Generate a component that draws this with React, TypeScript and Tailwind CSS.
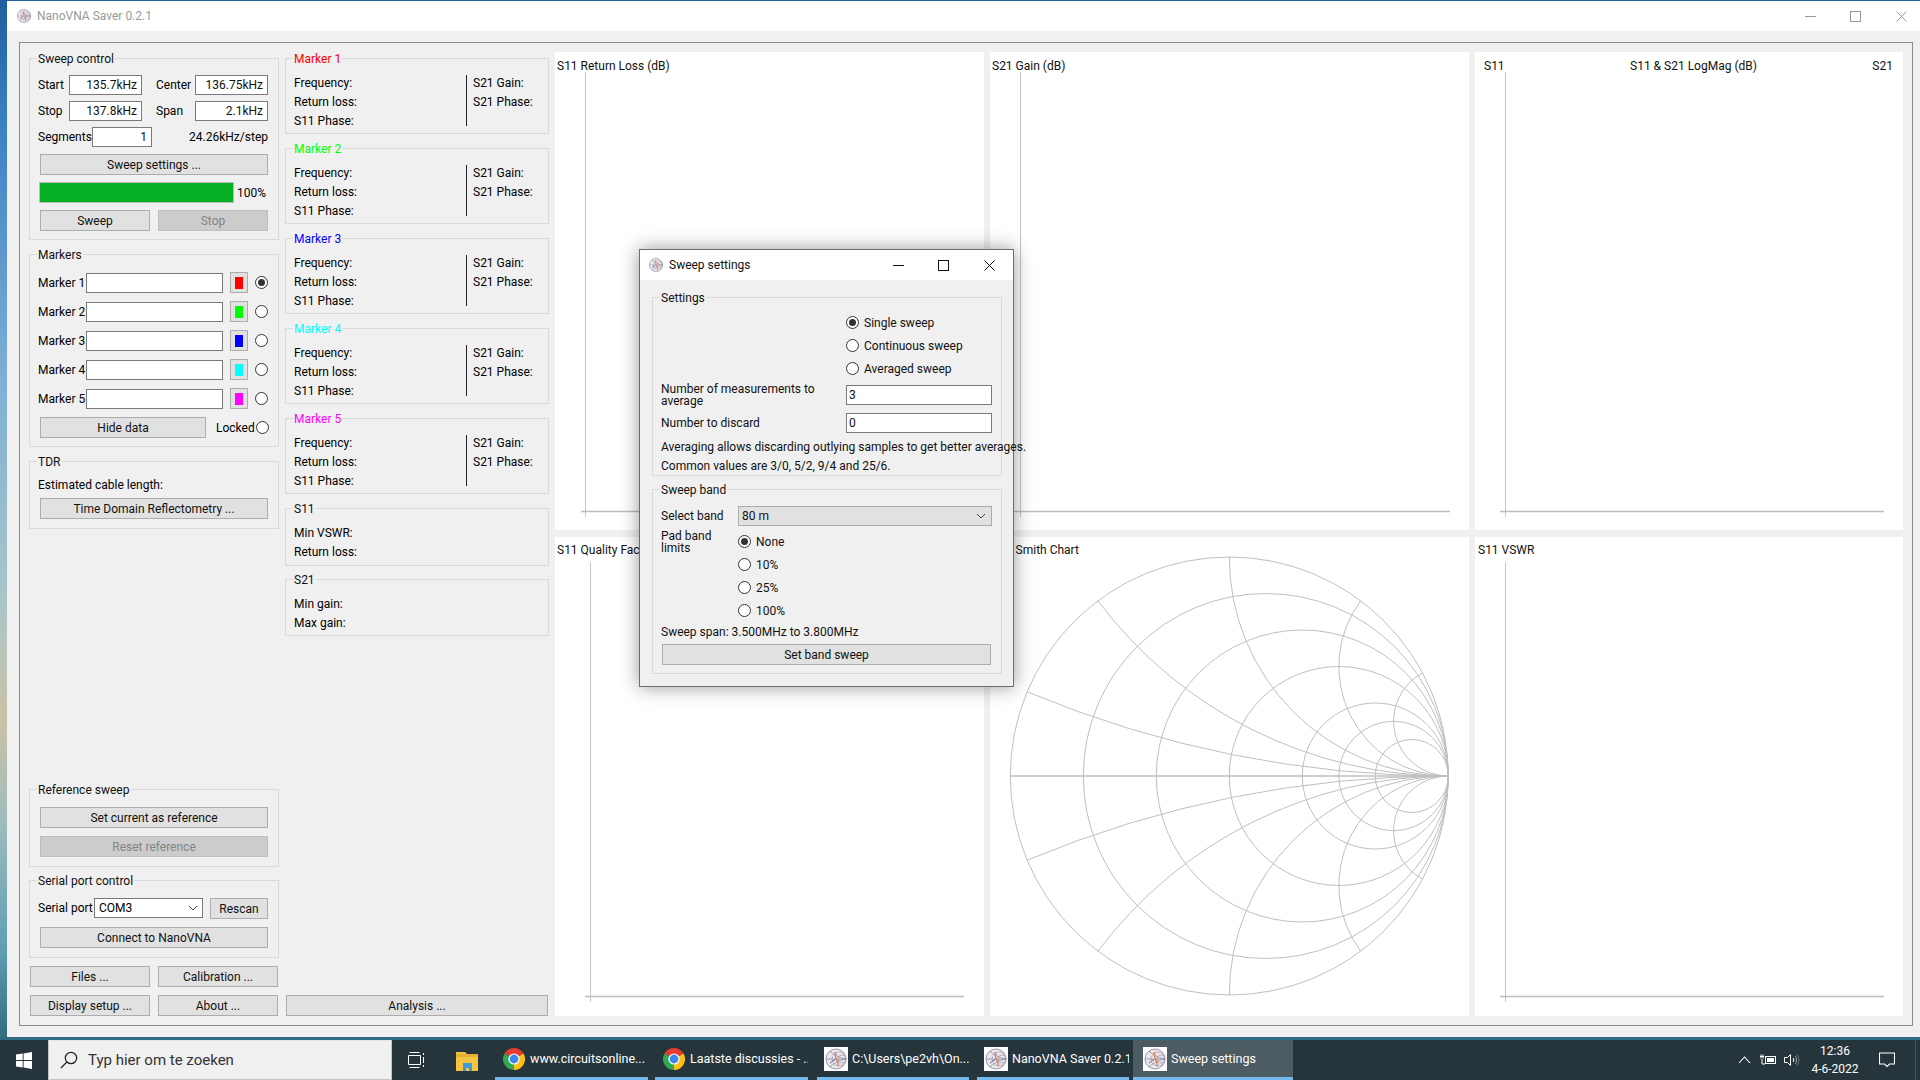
import React from "react";

const Btn = ({ w, h = "h-[21px]", children, off, cls = "" }: { w: string; h?: string; children: React.ReactNode; off?: boolean; cls?: string }) => (
  <div className={`${w} ${h} ${cls} shrink-0 flex items-center justify-center border ${off ? "bg-[#cccccc] border-[#bfbfbf] text-[#838383]" : "bg-[#e1e1e1] border-[#adadad] text-[#111]"}`}>{children}</div>
);

const Input = ({ w, children, left }: { w: string; children?: React.ReactNode; left?: boolean }) => (
  <div className={`${w} h-[20px] shrink-0 bg-white border border-[#7a7a7a] flex items-center ${left ? "justify-start pl-[2px]" : "justify-end pr-[4px]"} text-[#111]`}>{children}</div>
);

const Radio = ({ on, cls = "" }: { on?: boolean; cls?: string }) => (
  <div className={`w-[13px] h-[13px] shrink-0 rounded-full border border-[#333] bg-white flex items-center justify-center ${cls}`}>
    {on && <div className="w-[7px] h-[7px] rounded-full bg-[#333]" />}
  </div>
);

const Group = ({ title, color, h, children, cls = "", px = "pl-[8px] pr-[10px]" }: { title: string; color?: string; h: string; children: React.ReactNode; cls?: string; px?: string }) => (
  <div className={`relative ${h} ${cls} ${px} shrink-0 border border-[#dadada]`}>
    <div className={`absolute left-[7px] -top-[8px] h-[15px] px-px bg-[#f0f0f0] flex items-center ${color ?? "text-[#111]"}`}>{title}</div>
    {children}
  </div>
);

const Chevron = ({ cls = "" }: { cls?: string }) => (
  <svg width="10" height="6" viewBox="0 0 10 6" className={cls} fill="none" stroke="#444"><path d="M1 1l4 4 4-4" /></svg>
);

const Controls = ({ stroke, min, max, close }: { stroke: string; min: string; max: string; close: string }) => (
  <>
    <svg width="11" height="11" viewBox="0 0 11 11" className={min} fill="none" stroke={stroke}><path d="M0 5.5h11" /></svg>
    <svg width="11" height="11" viewBox="0 0 11 11" className={max} fill="none" stroke={stroke}><rect x=".5" y=".5" width="10" height="10" /></svg>
    <svg width="11" height="11" viewBox="0 0 11 11" className={close} fill="none" stroke={stroke}><path d="M.5.5l10 10M10.5.5l-10 10" /></svg>
  </>
);

const AppIcon = ({ size = 16, box }: { size?: number; box?: boolean }) => (
  <svg width={size} height={size} viewBox="0 0 24 24" className={`shrink-0 ${box ? "bg-white" : ""}`} fill="none">
    <circle cx="12" cy="12" r="10" fill="#e8e6ea" stroke="#9a98a8" strokeWidth="1" />
    <circle cx="15" cy="12" r="7" stroke="#a8a6b4" strokeWidth=".8" />
    <circle cx="18" cy="12" r="4" stroke="#a8a6b4" strokeWidth=".8" />
    <path d="M2 12h20M22 12C14 11 8 6 6 4M22 12C14 13 8 18 6 20" stroke="#8f8da0" strokeWidth=".8" />
    <path d="M11 5c2 3 0 5 1 7s3 3 2 7" stroke="#e2703a" strokeWidth="1.2" />
    <path d="M6 16c2-1 3-3 5-3" stroke="#4a4aa0" strokeWidth=".9" />
  </svg>
);

const ChromeIcon = () => (
  <svg width="24" height="24" viewBox="0 0 24 24" className="shrink-0">
    <path d="M12 12L2.47 6.5A11 11 0 0 1 21.53 6.5Z" fill="#e33b2e" />
    <path d="M12 12L21.53 6.5A11 11 0 0 1 12 23Z" fill="#fbc116" />
    <path d="M12 12L12 23A11 11 0 0 1 2.47 6.5Z" fill="#2fa84f" />
    <circle cx="12" cy="12" r="5.6" fill="#fff" />
    <circle cx="12" cy="12" r="4.4" fill="#3f86ee" />
  </svg>
);

const Chart = ({ children, vx, vTop, vBot, hy, hx1, hx2 }: { children: React.ReactNode; vx: number; vTop: number; vBot: number; hy: number; hx1: number; hx2: number }) => (
  <div className="relative bg-white">
    <svg className="absolute inset-0 w-full h-full" fill="none">
      <path d={`M${vx + 0.5} ${vTop}V${vBot}`} stroke="#c4c4c4" />
      <path d={`M${hx1} ${hy + 0.5}H${hx2}`} stroke="#bdbdbd" strokeWidth="1.4" />
    </svg>
    {children}
  </div>
);

const Smith = () => {
  const cx = 239.3, cy = 239, R = 219;
  const xs = [0.2, 0.5, 1, 2, 4];
  const rs = [1, 5 / 6, 4 / 6, 3 / 6, 2 / 6, 1.5 / 6, 1 / 6];
  return (
    <svg className="absolute inset-0 w-full h-full" fill="none" stroke="#bfbfbf">
      {rs.map((k) => (
        <circle key={k} cx={cx + R - R * k} cy={cy} r={R * k} />
      ))}
      <path d={`M${cx - R} ${cy}H${cx + R}`} strokeWidth="1.3" />
      {xs.map((x) => {
        const r = R / x;
        const gr = (x * x - 1) / (x * x + 1);
        const gi = (2 * x) / (x * x + 1);
        const sx = cx + R * gr;
        return (
          <g key={x}>
            <path d={`M${sx} ${cy - R * gi}A${r} ${r} 0 0 0 ${cx + R} ${cy}`} />
            <path d={`M${sx} ${cy + R * gi}A${r} ${r} 0 0 1 ${cx + R} ${cy}`} />
          </g>
        );
      })}
    </svg>
  );
};

const MarkerGroup = ({ n, color }: { n: number; color: string }) => (
  <Group title={`Marker ${n}`} color={color} h="h-[76px]" cls="mb-[14px]" px="pl-[8px]">
    <div className="flex pt-[14px]">
      <div className="w-[172px]">
        <div className="h-[19px] flex items-center">Frequency:</div>
        <div className="h-[19px] flex items-center">Return loss:</div>
        <div className="h-[19px] flex items-center">S11 Phase:</div>
      </div>
      <div className="w-px h-[51px] mt-[2px] bg-[#222]" />
      <div className="ml-[6px]">
        <div className="h-[19px] flex items-center">S21 Gain:</div>
        <div className="h-[19px] flex items-center">S21 Phase:</div>
      </div>
    </div>
  </Group>
);

const markers = [
  { n: 1, c: "bg-[#ff0000]", on: true },
  { n: 2, c: "bg-[#00ff00]" },
  { n: 3, c: "bg-[#0000ff]" },
  { n: 4, c: "bg-[#00ffff]" },
  { n: 5, c: "bg-[#ff00ff]" },
];

const TaskItem = ({ w, ml, text, chrome, active }: { w: string; ml: string; text: string; chrome?: boolean; active?: boolean }) => (
  <div className={`${w} ${ml} h-[40px] shrink-0 flex items-center border-b-[3px] border-[#76b9ed] ${active ? "bg-[#4d5b62] pl-[10px]" : "pl-[7px]"} gap-[4px] text-white text-[12.5px] whitespace-nowrap overflow-hidden`}>
    {chrome ? <ChromeIcon /> : <AppIcon size={24} box />}
    <span className="pt-[1px]">{text}</span>
  </div>
);

export default function App() {
  return (
    <div className="w-[1920px] h-[1080px] overflow-hidden flex flex-col text-[12px] leading-none [font-family:Roboto,sans-serif] bg-[linear-gradient(180deg,#1f5f9c_0px,#3a80c4_120px,#7eb0d6_380px,#a9c6c8_600px,#cbc2a6_720px,#9fbcbc_820px,#5f9fb4_950px,#2f6a80_1040px)] relative">
      <div className="h-[1040px] pt-px pl-[7px] flex flex-col shrink-0">
        {/* main window */}
        <div className="w-[1913px] h-[1036px] bg-[#f0f0f0] flex flex-col">
          <div className="h-[30px] bg-white flex items-center shrink-0 pl-[9px] text-[#999]">
            <AppIcon size={16} />
            <span className="ml-[5px]">NanoVNA Saver 0.2.1</span>
            <Controls stroke="#999" min="ml-auto" max="ml-[34px]" close="ml-[35px] mr-[13px]" />
          </div>
          <div className="flex-1 pt-[11px] pl-[12px] pr-[7px]">
            <div className="h-[984px] border border-[#8a8a96] flex">
              {/* column 1 */}
              <div className="w-[250px] ml-[9px] shrink-0 pt-[15px] flex flex-col">
                <Group title="Sweep control" h="h-[182px]" cls="mb-[14px]">
                  <div className="pt-[16px] flex">
                    <div className="w-[104px] flex flex-col gap-[6px]">
                      <div className="flex items-center"><span className="w-[31px]">Start</span><Input w="w-[73px]">135.7kHz</Input></div>
                      <div className="flex items-center"><span className="w-[31px]">Stop</span><Input w="w-[73px]">137.8kHz</Input></div>
                    </div>
                    <div className="w-px h-[46px] ml-[7px] bg-[#222]" />
                    <div className="ml-[7px] w-[112px] flex flex-col gap-[6px]">
                      <div className="flex items-center"><span className="w-[39px]">Center</span><Input w="w-[73px]">136.75kHz</Input></div>
                      <div className="flex items-center"><span className="w-[39px]">Span</span><Input w="w-[73px]">2.1kHz</Input></div>
                    </div>
                  </div>
                  <div className="mt-[6px] flex items-center">
                    <span className="w-[54px]">Segments</span>
                    <Input w="w-[60px]">1</Input>
                    <span className="flex-1 text-right">24.26kHz/step</span>
                  </div>
                  <Btn w="w-[228px]" cls="mt-[7px] ml-[2px]">Sweep settings ...</Btn>
                  <div className="mt-[7px] ml-[1px] flex items-center">
                    <div className="w-[195px] h-[21px] border border-[#bcbcbc] bg-[#06b025]" />
                    <span className="ml-[3px]">100%</span>
                  </div>
                  <div className="mt-[7px] ml-[2px] flex gap-[8px]">
                    <Btn w="w-[110px]">Sweep</Btn>
                    <Btn w="w-[110px]" off>Stop</Btn>
                  </div>
                </Group>
                <Group title="Markers" h="h-[193px]" cls="mb-[14px]">
                  <div className="pt-[17px] flex flex-col gap-[8px]">
                    {markers.map((m) => (
                      <div key={m.n} className="flex items-center h-[21px]">
                        <span className="w-[49px]">Marker {m.n}</span>
                        <Input w="w-[137px]" />
                        <div className="ml-[7px] w-[18px] h-[21px] bg-[#e1e1e1] border border-[#adadad] flex items-center justify-center">
                          <div className={`w-[8px] h-[12px] ${m.c}`} />
                        </div>
                        <Radio on={m.on} cls="ml-[7px]" />
                      </div>
                    ))}
                    <div className="flex items-center">
                      <Btn w="w-[166px]" cls="ml-[2px]">Hide data</Btn>
                      <span className="ml-[10px]">Locked</span>
                      <Radio cls="ml-auto mr-[-1px]" />
                    </div>
                  </div>
                </Group>
                <Group title="TDR" h="h-[68px]">
                  <div className="h-[16px] mt-[15px] flex items-center">Estimated cable length:</div>
                  <Btn w="w-[228px]" cls="mt-[5px] ml-[2px]">Time Domain Reflectometry ...</Btn>
                </Group>
                <div className="flex-1" />
                <Group title="Reference sweep" h="h-[78px]" cls="mb-[13px]">
                  <div className="pt-[17px] ml-[2px] flex flex-col gap-[8px]">
                    <Btn w="w-[228px]">Set current as reference</Btn>
                    <Btn w="w-[228px]" off>Reset reference</Btn>
                  </div>
                </Group>
                <Group title="Serial port control" h="h-[78px]" cls="mb-[8px]">
                  <div className="pt-[17px] flex items-start">
                    <span className="w-[56px] h-[20px] flex items-center">Serial port</span>
                    <div className="w-[109px] h-[20px] bg-white border border-[#7a7a7a] flex items-center justify-between pl-[4px] pr-[4px]">
                      <span>COM3</span><Chevron />
                    </div>
                    <Btn w="w-[58px]" cls="ml-[7px]">Rescan</Btn>
                  </div>
                  <Btn w="w-[228px]" cls="mt-[8px] ml-[2px]">Connect to NanoVNA</Btn>
                </Group>
                <div className="flex gap-[8px] ml-px mb-[8px]">
                  <Btn w="w-[120px]">Files ...</Btn>
                  <Btn w="w-[120px]">Calibration ...</Btn>
                </div>
                <div className="flex gap-[8px] ml-px mb-[9px]">
                  <Btn w="w-[120px]">Display setup ...</Btn>
                  <Btn w="w-[120px]">About ...</Btn>
                </div>
              </div>
              {/* column 2 */}
              <div className="w-[264px] ml-[6px] shrink-0 pt-[15px] flex flex-col">
                <MarkerGroup n={1} color="text-[#ff0000]" />
                <MarkerGroup n={2} color="text-[#00ff00]" />
                <MarkerGroup n={3} color="text-[#0000ff]" />
                <MarkerGroup n={4} color="text-[#00ffff]" />
                <MarkerGroup n={5} color="text-[#ff00ff]" />
                <Group title="S11" h="h-[58px]" cls="mb-[13px]" px="pl-[8px]">
                  <div className="pt-[14px]">
                    <div className="h-[19px] flex items-center">Min VSWR:</div>
                    <div className="h-[19px] flex items-center">Return loss:</div>
                  </div>
                </Group>
                <Group title="S21" h="h-[57px]" px="pl-[8px]">
                  <div className="pt-[14px]">
                    <div className="h-[19px] flex items-center">Min gain:</div>
                    <div className="h-[19px] flex items-center">Max gain:</div>
                  </div>
                </Group>
                <div className="flex-1" />
                <Btn w="w-[262px]" cls="ml-px mb-[9px]">Analysis ...</Btn>
              </div>
              {/* charts */}
              <div className="ml-[6px] mt-[9px] h-[964px] grid grid-cols-[429px_479px_428px] grid-rows-[478px_479px] gap-x-[6px] gap-y-[7px] text-[#111]">
                <Chart vx={30} vTop={20} vBot={465} hy={459} hx1={26} hx2={404}><div className="relative pl-[2px] pt-[5px] h-[22px] flex items-center">S11 Return Loss (dB)</div></Chart>
                <Chart vx={30} vTop={20} vBot={465} hy={459} hx1={24} hx2={460}><div className="relative pl-[2px] pt-[5px] h-[22px] flex items-center">S21 Gain (dB)</div></Chart>
                <Chart vx={30} vTop={20} vBot={465} hy={459} hx1={25} hx2={409}>
                  <div className="relative pl-[9px] pr-[10px] pt-[5px] h-[22px] flex items-center justify-between">
                    <span>S11</span><span className="ml-[10px]">S11 &amp; S21 LogMag (dB)</span><span>S21</span>
                  </div>
                </Chart>
                <Chart vx={35} vTop={25} vBot={465} hy={459} hx1={30} hx2={409}><div className="relative pl-[2px] pt-[4px] h-[22px] flex items-center">S11 Quality Factor</div></Chart>
                <div className="relative bg-white">
                  <Smith />
                  <div className="relative pl-[2px] pt-[4px] h-[22px] flex items-center">S11 Smith Chart</div>
                </div>
                <Chart vx={30} vTop={25} vBot={465} hy={459} hx1={25} hx2={409}><div className="relative pl-[3px] pt-[4px] h-[22px] flex items-center">S11 VSWR</div></Chart>
              </div>
            </div>
          </div>
        </div>
      </div>

      {/* dialog */}
      <div className="absolute left-[639px] top-[249px] w-[375px] h-[438px] bg-[#f0f0f0] border border-[#6d6d6d] shadow-[0_0_18px_rgba(0,0,0,0.4)] flex flex-col text-[#111]">
        <div className="h-[30px] bg-white shrink-0 flex items-center pl-[8px] text-[#111]">
          <AppIcon size={16} />
          <span className="ml-[5px]">Sweep settings</span>
          <Controls stroke="#111" min="ml-auto" max="ml-[34px]" close="ml-[35px] mr-[18px]" />
        </div>
        <div className="pt-[17px] pl-[12px] w-[362px]">
          <Group title="Settings" h="h-[179px]" cls="mb-[13px]" px="pl-[8px]">
            <div className="pt-[13px] pl-[185px]">
              {[["Single sweep", true], ["Continuous sweep", false], ["Averaged sweep", false]].map(([t, on]) => (
                <div key={t as string} className="h-[23px] flex items-center gap-[5px]">
                  <Radio on={on as boolean} /><span>{t}</span>
                </div>
              ))}
            </div>
            <div className="mt-[3px] flex items-center"><span className="w-[185px]">Number of measurements to average</span><Input w="w-[146px]" left>3</Input></div>
            <div className="mt-[6px] flex items-center"><span className="w-[185px]">Number to discard</span><Input w="w-[146px]" left>0</Input></div>
            <div className="mt-[4px] h-[19px] flex items-center whitespace-nowrap">Averaging allows discarding outlying samples to get better averages.</div>
            <div className="h-[19px] flex items-center">Common values are 3/0, 5/2, 9/4 and 25/6.</div>
          </Group>
          <Group title="Sweep band" h="h-[185px]" px="pl-[8px]">
            <div className="pt-[16px] flex items-center">
              <span className="w-[77px]">Select band</span>
              <div className="w-[254px] h-[20px] bg-[#e1e1e1] border border-[#adadad] flex items-center justify-between pl-[3px] pr-[5px]">
                <span>80 m</span><Chevron />
              </div>
            </div>
            <div className="mt-[4px]">
              {["None", "10%", "25%", "100%"].map((t, i) => (
                <div key={t} className="h-[23px] flex items-center">
                  <span className="w-[77px]">{i === 0 ? "Pad band limits" : ""}</span>
                  <Radio on={i === 0} /><span className="ml-[5px]">{t}</span>
                </div>
              ))}
            </div>
            <div className="h-[19px] flex items-center">Sweep span: 3.500MHz to 3.800MHz</div>
            <Btn w="w-[329px]" cls="mt-[3px] ml-px">Set band sweep</Btn>
          </Group>
        </div>
      </div>

      {/* taskbar */}
      <div className="h-[40px] shrink-0 bg-[#26353c] flex items-center">
        <div className="w-[48px] h-full flex items-center justify-center">
          <svg width="18" height="17" viewBox="0 0 18 17" fill="#fff"><path d="M1 2.6L7.7 1.6V8H1zM8.6 1.5L17 0V8H8.6zM1 9h6.7v6.4L1 14.4zM8.6 9H17v8L8.6 15.6z" /></svg>
        </div>
        <div className="w-[344px] h-full bg-[#f0f0f0] border border-[#c4c4c4] border-t-[#e4e4e4] flex items-center pl-[11px] text-[15px] text-[#333]">
          <svg width="18" height="18" viewBox="0 0 18 18" fill="none" stroke="#222" strokeWidth="1.2"><circle cx="11" cy="7" r="5.7" /><path d="M6.8 11L1 17" /></svg>
          <span className="ml-[10px]">Typ hier om te zoeken</span>
        </div>
        <div className="w-[48px] flex justify-center">
          <svg width="17" height="16" viewBox="0 0 17 16" fill="none" stroke="#fff"><path d="M1 .5h10M1 15.5h10M0 3.5h12v9H0zM15 1v2M15 5v6M15 13v2" transform="translate(.5 0)" /></svg>
        </div>
        <div className="w-[55px] pl-[15px] flex">
          <svg width="24" height="24" viewBox="0 0 24 24"><path d="M1 4h9l2 2h11v17H1z" fill="#f5c242" /><path d="M1 6h22v3H1z" fill="#e8b030" /><path d="M8 15h9v8h-3v-3h-3v3H8z" fill="#3b9ae0" /></svg>
        </div>
        <TaskItem w="w-[153px]" ml="" text="www.circuitsonline..." chrome />
        <TaskItem w="w-[153px]" ml="ml-[7px]" text="Laatste discussies - ..." chrome />
        <TaskItem w="w-[152px]" ml="ml-[9px]" text="C:\Users\pe2vh\On..." />
        <TaskItem w="w-[152px]" ml="ml-[8px]" text="NanoVNA Saver 0.2.1" />
        <TaskItem w="w-[160px]" ml="ml-[4px]" text="Sweep settings" active />
        <div className="ml-auto flex items-center text-white">
          <svg width="13" height="8" viewBox="0 0 13 8" fill="none" stroke="#fff" strokeWidth="1.1"><path d="M1 7l5.5-6L12 7" /></svg>
          <svg className="ml-[9px]" width="16" height="12" viewBox="0 0 16 12" fill="none" stroke="#fff"><rect x="5.5" y="2.5" width="10" height="7" /><rect x="7" y="4" width="7" height="4" fill="#fff" stroke="none" /><path d="M0 2.5h4M1 .5v4M3 .5v4M2 5v5h3" /></svg>
          <svg className="ml-[8px]" width="16" height="14" viewBox="0 0 16 14" fill="none" stroke="#fff"><path d="M.5 4.5h3l3-3v11l-3-3h-3z" /><path d="M9 5c1 1 1 3 0 4" /><path d="M11 3c2 2 2 6 0 8" stroke="#aaa" /><path d="M13 1.5c2.6 3 2.6 8 0 11" stroke="#777" /></svg>
          <div className="w-[60px] ml-[5px] flex flex-col items-center gap-[6px]">
            <span>12:36</span><span>4-6-2022</span>
          </div>
          <svg className="ml-[14px]" width="16" height="16" viewBox="0 0 16 16" fill="none" stroke="#fff" strokeWidth="1.1"><path d="M.5 1h15v11h-5L8 14.5 5.5 12h-5z" /></svg>
          <div className="w-[25px] h-[40px] flex justify-end"><div className="w-px h-full mr-[4px] bg-[#46555c]" /></div>
        </div>
      </div>
    </div>
  );
}
